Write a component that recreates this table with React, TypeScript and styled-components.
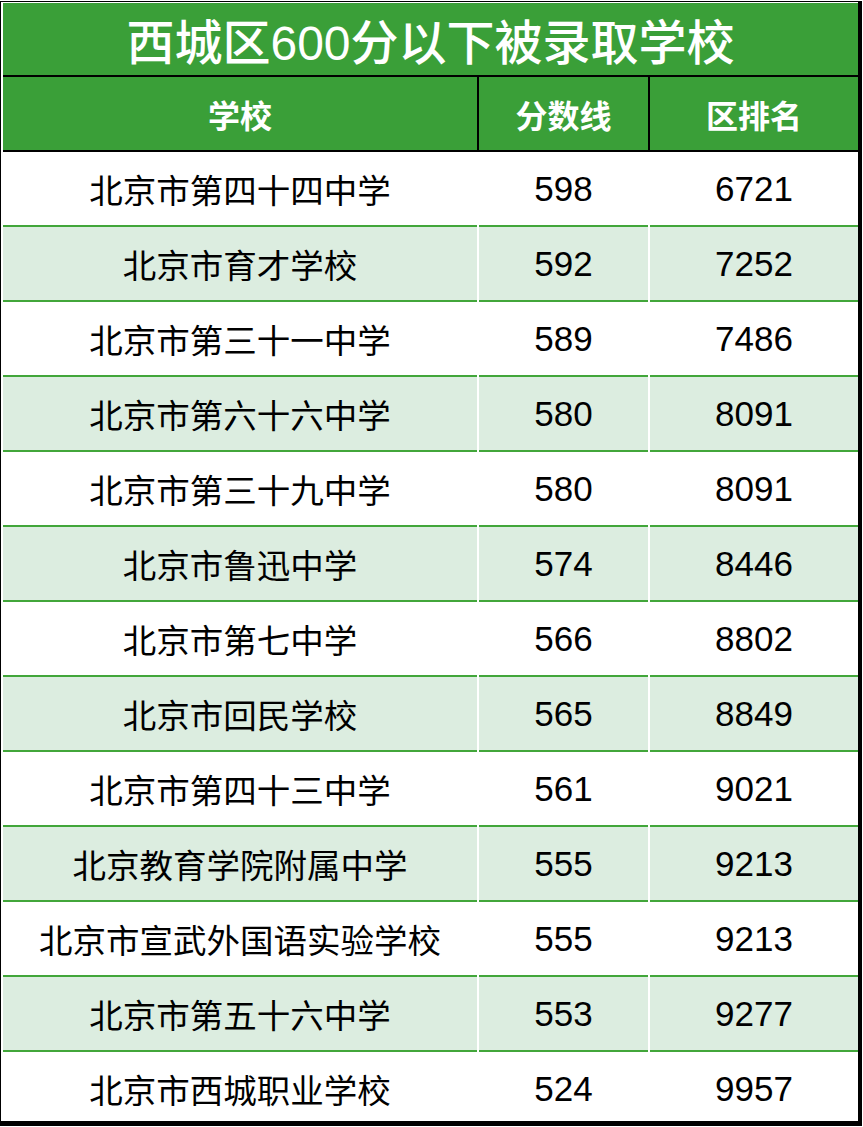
import React from 'react'
import styled, { createGlobalStyle } from 'styled-components'

const GlobalStyle = createGlobalStyle`
  html, body {
    margin: 0;
    padding: 0;
    background: #ffffff;
  }
  body {
    font-family: "Liberation Sans", "Noto Sans CJK SC", sans-serif;
  }
`

const Page = styled.div`
  padding-top: 1px;
  width: 863px;
`

const Frame = styled.div`
  width: 855px;
  border-top: 1px solid #000;
  border-left: 1px solid #000;
  border-right: 4px solid #000;
  border-bottom: 5px solid #000;
  padding: 1px 0 0 2px;
  background: #ffffff;
`

const Title = styled.div`
  height: 72px;
  display: flex;
  align-items: center;
  justify-content: center;
  background: #3a9f38;
  color: #ffffff;
  font-family: "Liberation Sans", "Noto Sans CJK SC", sans-serif;
  font-size: 48px;
  font-weight: 500;
  border-bottom: 2px solid #000;
`

const columns = '474px 169px 208px'

const HeaderRow = styled.div`
  display: grid;
  grid-template-columns: ${columns};
  column-gap: 2px;
  background: #000;
  border-bottom: 2px solid #000;
`

const HeaderCell = styled.div`
  height: 73px;
  display: flex;
  align-items: center;
  justify-content: center;
  background: #3a9f38;
  color: #ffffff;
  font-family: "Noto Sans CJK SC", sans-serif;
  font-size: 32px;
  font-weight: 600;
`

const Row = styled.div`
  display: grid;
  grid-template-columns: ${columns};
  column-gap: 2px;
  background: #ffffff;
`

const Cell = styled.div<{ $shade: boolean; $last?: boolean; $num?: boolean }>`
  height: ${p => (p.$last ? '69px' : '75px')};
  display: flex;
  align-items: center;
  justify-content: center;
  background: ${p => (p.$shade ? '#dcede0' : '#ffffff')};
  border-bottom: ${p => (p.$last ? 'none' : '2px solid #42a63a')};
  padding-top: ${p => (p.$last ? '4px' : '0')};
  box-sizing: border-box;
  color: #000;
  font-family: ${p =>
    p.$num ? '"Liberation Sans", sans-serif' : '"Noto Sans CJK SC", sans-serif'};
  font-size: ${p => (p.$num ? '35px' : '33.5px')};
  font-weight: 400;
`

const rows: [string, number, number][] = [
  ['北京市第四十四中学', 598, 6721],
  ['北京市育才学校', 592, 7252],
  ['北京市第三十一中学', 589, 7486],
  ['北京市第六十六中学', 580, 8091],
  ['北京市第三十九中学', 580, 8091],
  ['北京市鲁迅中学', 574, 8446],
  ['北京市第七中学', 566, 8802],
  ['北京市回民学校', 565, 8849],
  ['北京市第四十三中学', 561, 9021],
  ['北京教育学院附属中学', 555, 9213],
  ['北京市宣武外国语实验学校', 555, 9213],
  ['北京市第五十六中学', 553, 9277],
  ['北京市西城职业学校', 524, 9957],
]

const App = () => (
  <Page>
    <GlobalStyle />
    <Frame>
      <Title>西城区600分以下被录取学校</Title>
      <HeaderRow>
        <HeaderCell>学校</HeaderCell>
        <HeaderCell>分数线</HeaderCell>
        <HeaderCell>区排名</HeaderCell>
      </HeaderRow>
      {rows.map(([name, score, rank], i) => {
        const shade = i % 2 === 1
        const last = i === rows.length - 1
        return (
          <Row key={name}>
            <Cell $shade={shade} $last={last}>{name}</Cell>
            <Cell $shade={shade} $last={last} $num>{score}</Cell>
            <Cell $shade={shade} $last={last} $num>{rank}</Cell>
          </Row>
        )
      })}
    </Frame>
  </Page>
)

export default App
